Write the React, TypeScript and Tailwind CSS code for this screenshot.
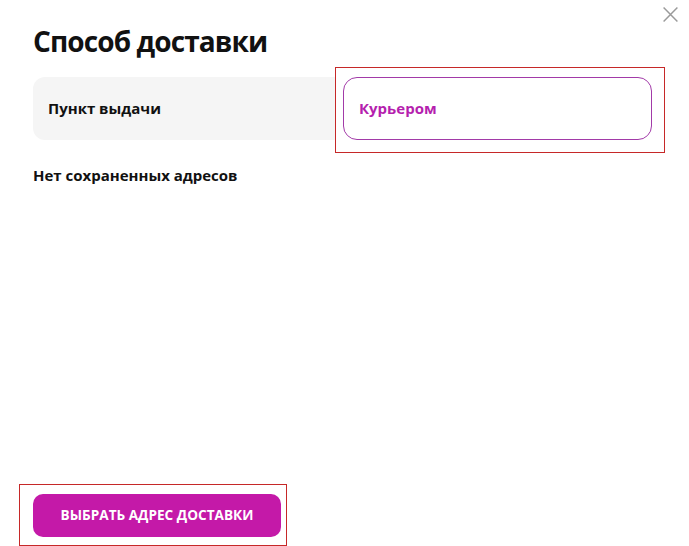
const App = () => {
  return (
    <div className="relative h-[546px] w-[689px] bg-white flex flex-col" style={{ fontFamily: '"Open Sans", "Noto Sans", sans-serif' }}>
      <button className="absolute right-[10px] top-[6px] text-[#9a9a9a]">
        <svg className="w-[17px] h-[17px]" viewBox="0 0 16 16" fill="none" stroke="currentColor" strokeWidth={1.4}>
          <path d="M1.5 1.5l13 13M14.5 1.5l-13 13" />
        </svg>
      </button>

      <h1 className="ml-[33px] mt-[22px] text-[28px] leading-[38px] font-bold text-[#111] tracking-[-0.9px]">Способ доставки</h1>

      <div className="flex items-start ml-[33px] mt-[7px]">
        <div className="mt-[10px] h-[63px] w-[302px] rounded-l-xl bg-[#f5f5f5] flex items-center pl-[15px]">
          <span className="text-[15px] font-bold text-[#111]">Пункт выдачи</span>
        </div>
        <div className="border border-[#c62828] bg-white w-[330px] h-[86px] pl-[7px] pt-[9px]">
          <div className="h-[63px] w-[309px] rounded-[14px] border border-[#a23aa8] flex items-center pl-[15px]">
            <span className="text-[15px] font-bold text-[#b51fae]">Курьером</span>
          </div>
        </div>
      </div>

      <p className="ml-[33px] mt-[11px] text-[15px] font-bold text-[#111]">Нет сохраненных адресов</p>

      <div className="mt-auto ml-[19px] w-[268px] h-[62px] border border-[#c62828] pl-[13px] pt-[9px]">
        <button className="w-[248px] h-[43px] rounded-[10px] bg-[#c419a8] text-white text-[13.6px] font-bold uppercase">
          Выбрать адрес доставки
        </button>
      </div>
    </div>
  );
};

export default App;
